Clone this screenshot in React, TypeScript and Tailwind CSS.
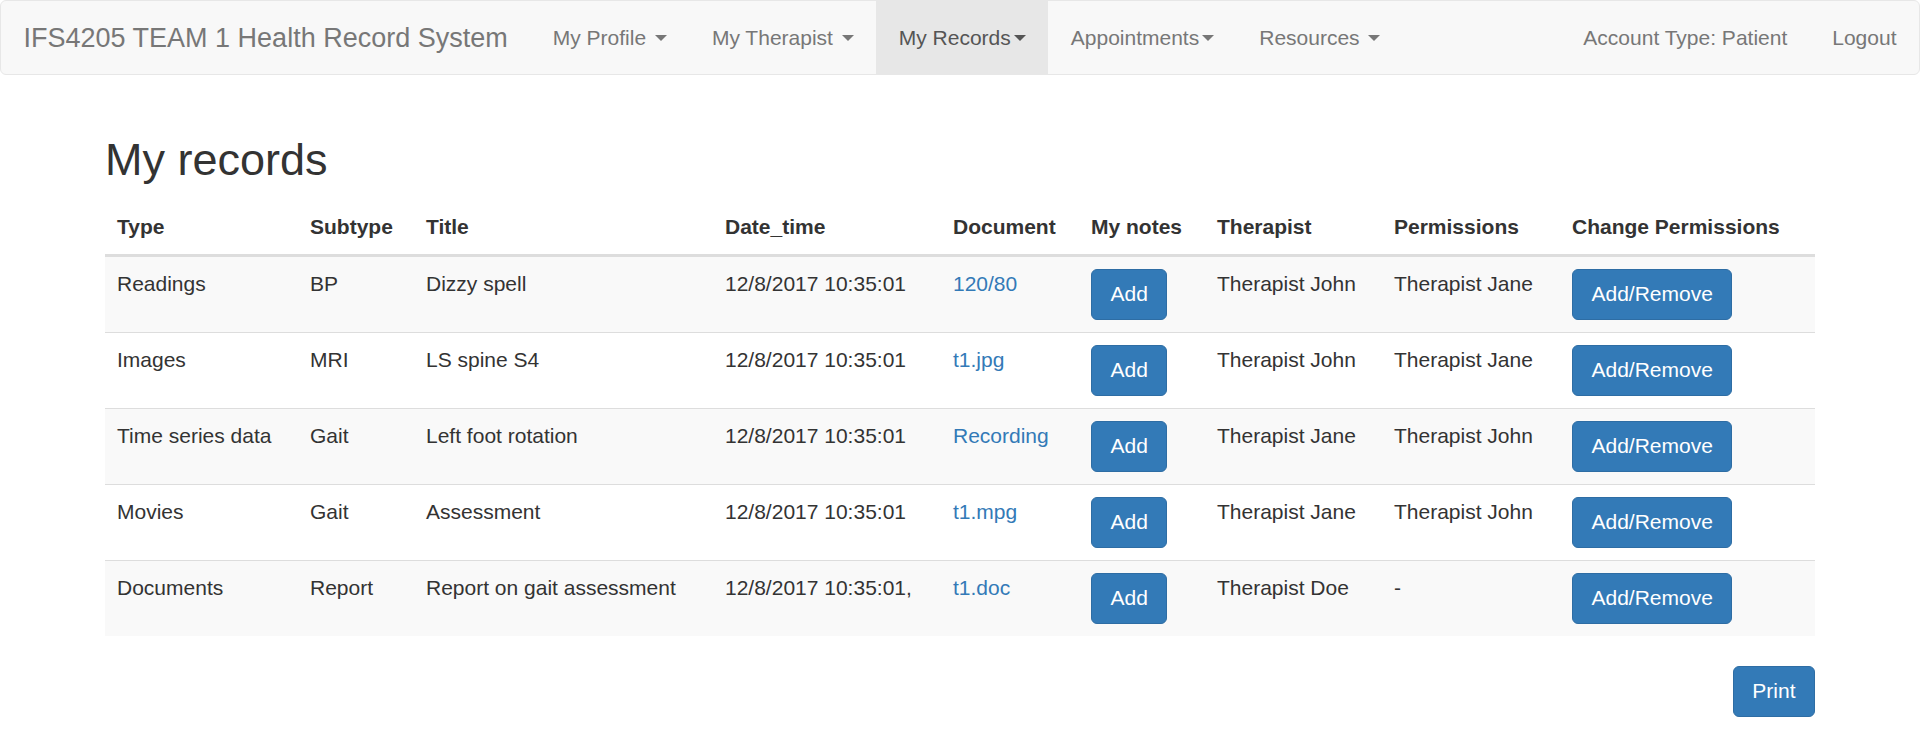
import React from 'react'

interface RecordRow {
  type: string
  subtype: string
  title: string
  dateTime: string
  document: string
  therapist: string
  permissions: string
}

const rows: RecordRow[] = [
  { type: 'Readings', subtype: 'BP', title: 'Dizzy spell', dateTime: '12/8/2017 10:35:01', document: '120/80', therapist: 'Therapist John', permissions: 'Therapist Jane' },
  { type: 'Images', subtype: 'MRI', title: 'LS spine S4', dateTime: '12/8/2017 10:35:01', document: 't1.jpg', therapist: 'Therapist John', permissions: 'Therapist Jane' },
  { type: 'Time series data', subtype: 'Gait', title: 'Left foot rotation', dateTime: '12/8/2017 10:35:01', document: 'Recording', therapist: 'Therapist Jane', permissions: 'Therapist John' },
  { type: 'Movies', subtype: 'Gait', title: 'Assessment', dateTime: '12/8/2017 10:35:01', document: 't1.mpg', therapist: 'Therapist Jane', permissions: 'Therapist John' },
  { type: 'Documents', subtype: 'Report', title: 'Report on gait assessment', dateTime: '12/8/2017 10:35:01,', document: 't1.doc', therapist: 'Therapist Doe', permissions: '-' },
]

const columns = ['Type', 'Subtype', 'Title', 'Date_time', 'Document', 'My notes', 'Therapist', 'Permissions', 'Change Permissions']
const widths = ['w-[193px]', 'w-[116px]', 'w-[299px]', 'w-[228px]', 'w-[138px]', 'w-[126px]', 'w-[177px]', 'w-[178px]', 'w-[255px]']

function Caret() {
  return (
    <span className="inline-block w-0 h-0 ml-[3px] align-middle border-t-[6px] border-t-current border-x-[6px] border-x-transparent" />
  )
}

function NavItem({ label, caret, spaced, active }: { label: string; caret?: boolean; spaced?: boolean; active?: boolean }) {
  return (
    <li className="flex">
      <a
        className={`flex items-center px-[22.5px] leading-[30px] ${
          active ? 'bg-[#e7e7e7] text-[#555]' : 'text-[#777]'
        }`}
      >
        {label}
        {caret && spaced && <span>&nbsp;</span>}
        {caret && <Caret />}
      </a>
    </li>
  )
}

function PrimaryButton({ children, className = '' }: { children: React.ReactNode; className?: string }) {
  return (
    <button
      className={`h-[51px] px-[18.5px] rounded-[6px] border border-[#2e6da4] bg-[#337ab7] text-white text-[21px] leading-[30px] ${className}`}
    >
      {children}
    </button>
  )
}

export default function App() {
  return (
    <div className="min-h-[738px] bg-white font-['Liberation_Sans',Arial,sans-serif] text-[21px] leading-[30px] text-[#333]">
      <nav className="h-[75px] flex border border-[#e7e7e7] bg-[#f8f8f8] rounded-[6px]">
        <a className="flex items-center px-[22.5px] text-[27px] leading-[30px] text-[#777]">
          IFS4205 TEAM 1 Health Record System
        </a>
        <ul className="flex">
          <NavItem label="My Profile" caret spaced />
          <NavItem label="My Therapist" caret spaced />
          <NavItem label="My Records" caret active />
          <NavItem label="Appointments" caret />
          <NavItem label="Resources" caret spaced />
        </ul>
        <ul className="flex ml-auto">
          <NavItem label="Account Type: Patient" />
          <NavItem label="Logout" />
        </ul>
      </nav>

      <div className="mx-auto w-[1755px] px-[22.5px] pt-[30px]">
        <h2 className="mt-[30px] mb-[15px] text-[45px] leading-[1.1] font-normal">My records</h2>

        <table className="w-full table-fixed border-collapse mb-[30px]">
          <colgroup>
            {widths.map((w, i) => (
              <col key={i} className={w} />
            ))}
          </colgroup>
          <thead>
            <tr>
              {columns.map((c) => (
                <th key={c} className="p-[12px] text-left font-bold align-bottom border-b-[3px] border-[#ddd] whitespace-nowrap">
                  {c}
                </th>
              ))}
            </tr>
          </thead>
          <tbody>
            {rows.map((r, i) => (
              <tr
                key={r.type}
                className={`${i % 2 === 0 ? 'bg-[#f9f9f9]' : 'bg-white'} ${i > 0 ? 'border-t border-[#ddd]' : ''}`}
              >
                <td className="p-[12px] align-top">{r.type}</td>
                <td className="p-[12px] align-top">{r.subtype}</td>
                <td className="p-[12px] align-top">{r.title}</td>
                <td className="p-[12px] align-top whitespace-nowrap">{r.dateTime}</td>
                <td className="p-[12px] align-top">
                  <a className="text-[#337ab7]">{r.document}</a>
                </td>
                <td className="p-[12px] align-top">
                  <PrimaryButton>Add</PrimaryButton>
                </td>
                <td className="p-[12px] align-top">{r.therapist}</td>
                <td className="p-[12px] align-top">{r.permissions}</td>
                <td className="p-[12px] align-top">
                  <PrimaryButton>Add/Remove</PrimaryButton>
                </td>
              </tr>
            ))}
          </tbody>
        </table>

        <div className="flex justify-end">
          <PrimaryButton>Print</PrimaryButton>
        </div>
      </div>
    </div>
  )
}
